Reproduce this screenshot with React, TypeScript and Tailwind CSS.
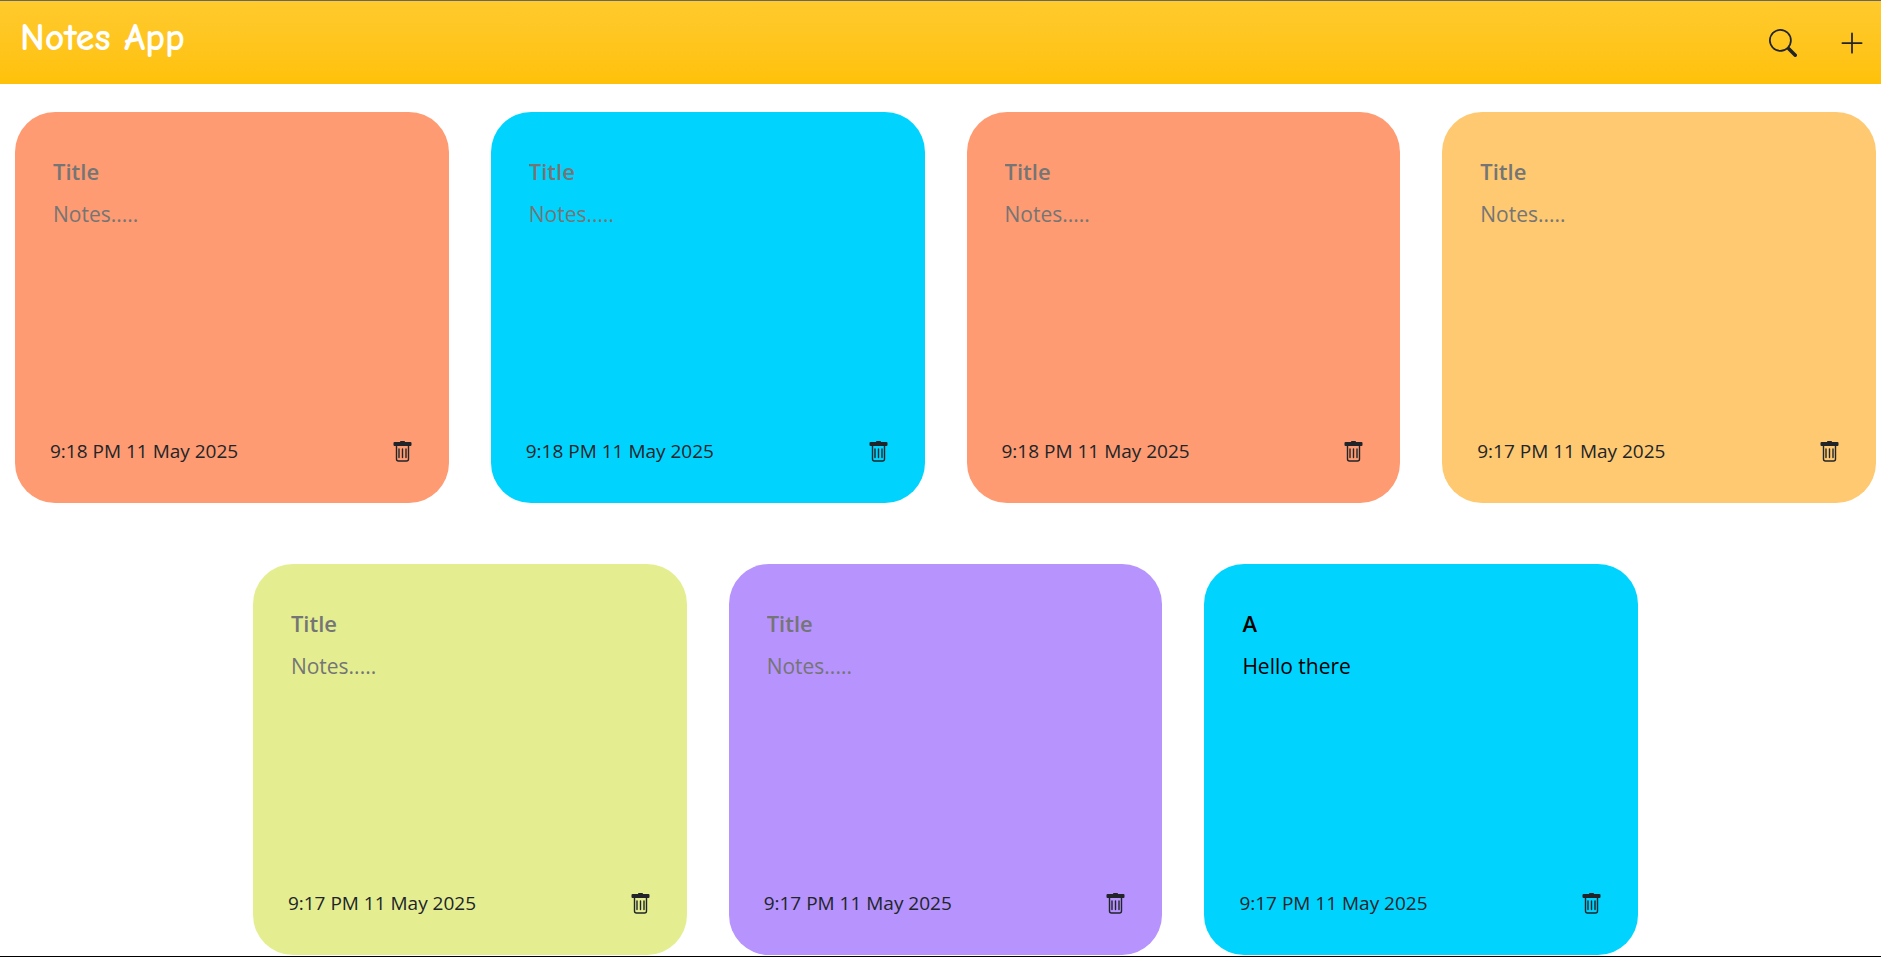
import { useState } from "react";
import { BsPlusLg, BsSearch } from "react-icons/bs";

type Note = {
  id: number;
  title: string;
  body: string;
  time: string;
  color: string;
};

const initialNotes: Note[] = [
  { id: 7, title: "", body: "", time: "9:18 PM 11 May 2025", color: "bg-[#fe9b72]" },
  { id: 6, title: "", body: "", time: "9:18 PM 11 May 2025", color: "bg-[#00d4fe]" },
  { id: 5, title: "", body: "", time: "9:18 PM 11 May 2025", color: "bg-[#fe9b72]" },
  { id: 4, title: "", body: "", time: "9:17 PM 11 May 2025", color: "bg-[#fec971]" },
  { id: 3, title: "", body: "", time: "9:17 PM 11 May 2025", color: "bg-[#e4ee91]" },
  { id: 2, title: "", body: "", time: "9:17 PM 11 May 2025", color: "bg-[#b693fd]" },
  { id: 1, title: "A", body: "Hello there", time: "9:17 PM 11 May 2025", color: "bg-[#00d4fe]" },
];

function TrashIcon() {
  return (
    <svg viewBox="0 -1 23 23" fill="currentColor" className="size-[23px]" aria-hidden="true">
      <path d="M9 1V0.8A.8.8 0 0 1 9.8 0H13.2A.8.8 0 0 1 14 .8V1H19.5A1 1 0 0 1 20.5 2V4A1 1 0 0 1 19.5 5H3.5A1 1 0 0 1 2.5 4V2A1 1 0 0 1 3.5 1Z" />
      <path
        d="M5.5 4.5V18A2 2 0 0 0 7.5 20H15.5A2 2 0 0 0 17.5 18V4.5"
        fill="none"
        stroke="currentColor"
        strokeWidth="1.4"
      />
      <path
        d="M8 8V16.5M11.5 8V16.5M15 8V16.5"
        fill="none"
        stroke="currentColor"
        strokeWidth="1.4"
        strokeLinecap="round"
      />
    </svg>
  );
}

function NoteCard({
  note,
  onChange,
  onDelete,
}: {
  note: Note;
  onChange: (patch: Partial<Note>) => void;
  onDelete: () => void;
}) {
  return (
    <article
      className={`flex h-[391px] w-full flex-col rounded-[40px] px-[35px] pt-[39px] pb-8 md:w-[calc((100%-42px)/2)] xl:w-[calc((100%-126px)/4)] ${note.color}`}
    >
      <input
        type="text"
        aria-label="Note title"
        placeholder="Title"
        value={note.title}
        onChange={(e) => onChange({ title: e.target.value })}
        className="h-10 w-full bg-transparent px-[3px] text-[22px] font-semibold text-black outline-none placeholder:text-[#757575]"
      />
      <textarea
        aria-label="Note text"
        placeholder="Notes....."
        value={note.body}
        onChange={(e) => onChange({ body: e.target.value })}
        className="mt-[5px] w-full flex-1 resize-none bg-transparent px-[3px] text-[21px] leading-9 text-black outline-none placeholder:text-[#757575]"
      />
      <footer className="flex h-10 items-center justify-between text-[#212529]">
        <time className="text-[19px]">{note.time}</time>
        <button type="button" aria-label="Delete note" onClick={onDelete} className="cursor-pointer">
          <TrashIcon />
        </button>
      </footer>
    </article>
  );
}

export default function App() {
  const [notes, setNotes] = useState(initialNotes);

  const addNote = () =>
    setNotes((all) => [
      { id: Date.now(), title: "", body: "", time: "9:18 PM 11 May 2025", color: "bg-[#fec971]" },
      ...all,
    ]);

  return (
    <div className="min-h-screen border-b border-black bg-white font-['Segoe_UI','Open_Sans',sans-serif]">
      <header className="flex h-[84px] justify-between border-t border-[#666666] bg-linear-to-b from-[#ffca2c] to-[#ffc107] pr-[15px] pl-5">
        <h1 className="pt-[9px] font-['Comic_Sans_MS','Comic_Neue',sans-serif] text-[38px] leading-[56px] font-bold text-white">
          Notes App
        </h1>
        <div className="flex items-center gap-[41px] text-[#212529]">
          <button type="button" aria-label="Search notes" className="cursor-pointer">
            <BsSearch className="size-7" />
          </button>
          <button type="button" aria-label="Add note" onClick={addNote} className="cursor-pointer">
            <BsPlusLg className="size-7" />
          </button>
        </div>
      </header>
      <main className="flex flex-wrap justify-center gap-x-[42px] gap-y-[61px] pt-7 pr-[5px] pl-[15px]">
        {notes.map((note) => (
          <NoteCard
            key={note.id}
            note={note}
            onChange={(patch) =>
              setNotes((all) => all.map((n) => (n.id === note.id ? { ...n, ...patch } : n)))
            }
            onDelete={() => setNotes((all) => all.filter((n) => n.id !== note.id))}
          />
        ))}
      </main>
    </div>
  );
}
